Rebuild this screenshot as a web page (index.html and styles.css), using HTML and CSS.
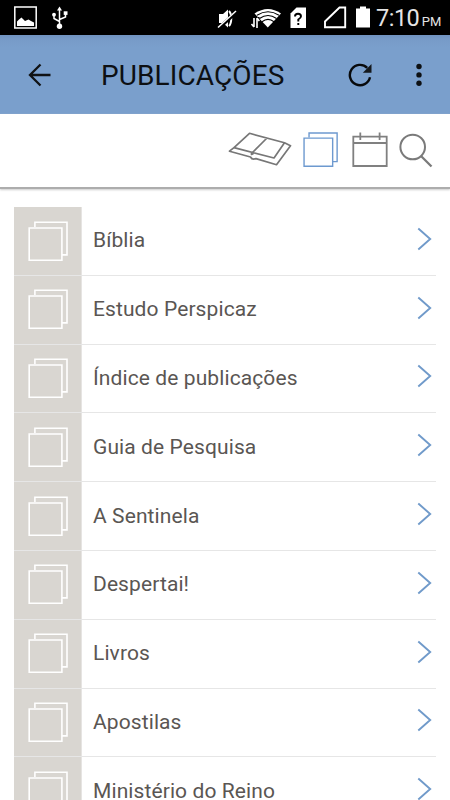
FILE: index.html
```
<!DOCTYPE html>
<html lang="pt">
<head>
<meta charset="utf-8">
<title>Publicações</title>
<link rel="stylesheet" href="styles.css">
</head>
<body>
<svg width="0" height="0" class="defs">
  <symbol id="stack" viewBox="0 0 40 40"><path d="M6.9 6.1V1.2H39V33.9H34.6M1.2 7H33.9V39.2H1.2Z" fill="none" stroke="currentColor" stroke-width="1.6"/></symbol>
  <symbol id="chevron" viewBox="0 0 15 24"><path d="M1.3 1.5L13.2 12L1.3 22.5" fill="none" stroke="currentColor" stroke-width="1.9"/></symbol>
</svg>
<div class="statusbar">
  <svg class="status-icons" width="450" height="35" viewBox="0 0 450 35">
    <rect x="14.800" y="7" width="21.400" height="21" fill="none" stroke="#fff" stroke-width="1.500"/>
    <path d="M17 26V21.500L19 19.500L21.500 17.500L25 21L28.500 19.500L31 21L34 22.500V26Z" fill="#fff"/>
    <g fill="none" stroke="#fff" stroke-width="1.500"><path d="M59.500 9V26M54 15V18.500L59.500 21.500M65.500 13V17L59.500 19.500"/></g>
    <path d="M57 10.500L59.500 6.500L62 10.500Z" fill="#fff"/><circle cx="59.500" cy="26.300" r="2.700" fill="#fff"/><circle cx="54" cy="14.700" r="1.900" fill="#fff"/><rect x="63.700" y="11.300" width="3.800" height="3.600" fill="#fff"/>
    <path d="M219 14H223L228 9.500V27.500L223 23H219Z" fill="#fff"/><path d="M229 11C232 14 232 23 229 26" fill="none" stroke="#fff" stroke-width="2"/>
    <path d="M219 28L236.500 12" stroke="#000" stroke-width="3.500"/><path d="M218 27.500L236 11" stroke="#fff" stroke-width="1.500"/>
    <path d="M267.800 27.500L254.500 13.500Q268 4.500 281 13.500Z" fill="#fff"/>
    <g fill="none" stroke="#000" stroke-width="1.100"><path d="M257 15.200Q268 8.200 279 15.200M259.500 18.500Q268 12.500 276.500 18.500M262 21.800Q268 17 274 21.800"/></g>
    <path d="M250.500 17H259.500V28.500H250.500Z" fill="#000"/><path d="M254 18V27M251.500 24L254 27M257 28V18M259.300 21L257 18" fill="none" stroke="#fff" stroke-width="1.600"/>
    <path d="M296.500 7.500H306V28H290.500V13.500Z" fill="#fff"/><path d="M295 16.500Q295 13.700 298 13.700Q301 13.700 301 16.300Q301 18 298.300 19.500V21.500M298.300 23V25" fill="none" stroke="#000" stroke-width="1.900"/>
    <path d="M345.200 7.500V27.200H325V21.500L339.500 7.500Z" fill="none" stroke="#fff" stroke-width="1.900"/>
    <path d="M356 8.500H360V6.500H366V8.500H370V27.500H356Z" fill="#fff"/>
  </svg>
  <div class="clock">7:10<small>PM</small></div>
</div>
<header class="appbar">
  <svg class="back" width="24" height="24" viewBox="0 0 24 24"><path d="M22.500 12H2M12.500 1.500L2 12L12.500 22.500" fill="none" stroke="#101214" stroke-width="2.300"/></svg>
  <h1>PUBLICAÇÕES</h1>
  <svg class="refresh" width="24" height="24" viewBox="0 0 24 24"><path d="M22 14.300A10.200 10.200 0 1 1 19.200 4.800" fill="none" stroke="#080a0c" stroke-width="2.400"/><path d="M23.500 1V9.800H14.800Z" fill="#15191d"/></svg>
  <svg class="more" width="8" height="24" viewBox="0 0 8 24"><circle cx="4" cy="3.500" r="2.700"/><circle cx="4" cy="11.900" r="2.700"/><circle cx="4" cy="20.300" r="2.700"/></svg>
</header>
<nav class="toolbar">
  <svg class="book" width="64" height="34" viewBox="0 0 64 34"><path d="M21.500 1.300L56.500 10.800L46 26L6 15.600ZM39 6L24.500 20.500M6 15.600L1.500 19.200L22.500 25Q24 28 28 26.600L48.500 32.700L62.500 13.800L56.500 10.800M23.500 20V22.500L25.500 21.500" fill="none" stroke="#777" stroke-width="1.700" stroke-linejoin="round"/></svg>
  <svg class="pages" width="35" height="35"><use href="#stack"/></svg>
  <svg class="calendar" width="36" height="36" viewBox="0 0 36 36"><path d="M1.300 4.700H34.700V34H1.300ZM1.300 11H34.700M8.300 .5V8M27.600 .5V8" fill="none" stroke="#808080" stroke-width="1.800"/></svg>
  <svg class="search" width="34" height="36" viewBox="0 0 34 36"><circle cx="13.700" cy="15" r="12.300" fill="none" stroke="#7a7a7a" stroke-width="2"/><path d="M22 24L32.500 34.500" stroke="#7a7a7a" stroke-width="2.300"/></svg>
</nav>
<main class="list">
  <div class="row"><div class="thumb"><svg width="40" height="40"><use href="#stack"/></svg></div><span>Bíblia</span><svg class="chev" width="15" height="24"><use href="#chevron"/></svg></div>
  <div class="row"><div class="thumb"><svg width="40" height="40"><use href="#stack"/></svg></div><span>Estudo Perspicaz</span><svg class="chev" width="15" height="24"><use href="#chevron"/></svg></div>
  <div class="row"><div class="thumb"><svg width="40" height="40"><use href="#stack"/></svg></div><span>Índice de publicações</span><svg class="chev" width="15" height="24"><use href="#chevron"/></svg></div>
  <div class="row"><div class="thumb"><svg width="40" height="40"><use href="#stack"/></svg></div><span>Guia de Pesquisa</span><svg class="chev" width="15" height="24"><use href="#chevron"/></svg></div>
  <div class="row"><div class="thumb"><svg width="40" height="40"><use href="#stack"/></svg></div><span>A Sentinela</span><svg class="chev" width="15" height="24"><use href="#chevron"/></svg></div>
  <div class="row"><div class="thumb"><svg width="40" height="40"><use href="#stack"/></svg></div><span>Despertai!</span><svg class="chev" width="15" height="24"><use href="#chevron"/></svg></div>
  <div class="row"><div class="thumb"><svg width="40" height="40"><use href="#stack"/></svg></div><span>Livros</span><svg class="chev" width="15" height="24"><use href="#chevron"/></svg></div>
  <div class="row"><div class="thumb"><svg width="40" height="40"><use href="#stack"/></svg></div><span>Apostilas</span><svg class="chev" width="15" height="24"><use href="#chevron"/></svg></div>
  <div class="row"><div class="thumb"><svg width="40" height="40"><use href="#stack"/></svg></div><span>Ministério do Reino</span><svg class="chev" width="15" height="24"><use href="#chevron"/></svg></div>
</main>
</body>
</html>
```
FILE: styles.css
```
* { box-sizing: border-box; }
body {
  margin: 0;
  width: 450px;
  height: 800px;
  overflow: hidden;
  display: flex;
  flex-direction: column;
  background: #fff;
  font-family: Roboto, "Liberation Sans", sans-serif;
}
svg { flex: none; display: block; }
.defs { position: absolute; }
.statusbar {
  position: relative;
  flex: none;
  height: 35px;
  background: #000;
  display: flex;
  justify-content: flex-end;
}
.status-icons { position: absolute; left: 0; top: 0; }
.clock {
  width: 74px;
  height: 35px;
  line-height: 37px;
  font-size: 23.5px;
  letter-spacing: -.5px;
  color: #e4e4e4;
  white-space: nowrap;
}
.clock small { font-size: 13px; margin-left: 2.5px; letter-spacing: 0; }
.appbar {
  flex: none;
  height: 79px;
  display: flex;
  align-items: center;
  padding-left: 28px;
  background: linear-gradient(#7093c0, #779bc8 4px, #7a9fcc 12px);
}
.appbar h1 {
  margin: 2px 0 0 49px;
  width: 247px;
  font-size: 28px;
  font-weight: 400;
  line-height: 34px;
  letter-spacing: .1px;
  color: #0d1013;
}
.more { margin-left: 43px; fill: #0d1013; }
.toolbar {
  flex: none;
  height: 75px;
  display: flex;
  align-items: flex-start;
  padding: 18px 17px 0 0;
  justify-content: flex-end;
  border-bottom: 2px solid #adadad;
  box-shadow: 0 1px 2px #ccc;
}
.pages { margin: 0 14px 0 11px; color: #6d99cf; }
.search { margin-left: 11px; }
.list { padding: 18px 14px 0; }
.row {
  height: 68.8px;
  display: flex;
  align-items: center;
  border-bottom: 1px solid #e6e6e6;
}
.thumb {
  width: 68px;
  height: 100%;
  padding: 13.5px 0 0 14px;
  background: #d9d6d1;
  border-right: 1px solid #e6e4e2;
  color: #fff;
}
.row span {
  flex: 1;
  margin-left: 11px;
  margin-top: -1px;
  font-size: 21px;
  line-height: 26px;
  letter-spacing: .1px;
  color: #5a5653;
  white-space: nowrap;
}
.chev { margin: -4px 4px 0 0; color: #709aca; }
```
